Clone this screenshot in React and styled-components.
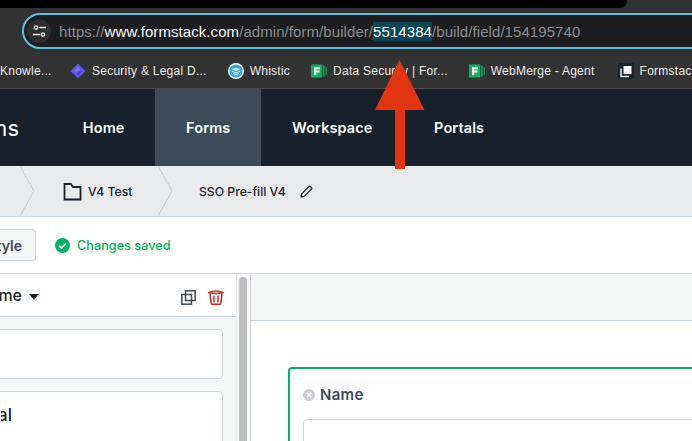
import React from 'react';
import styled, {createGlobalStyle} from 'styled-components';

const GlobalStyle = createGlobalStyle`
    html, body {
        margin: 0;
        padding: 0;
        width: 692px;
        height: 441px;
        overflow: hidden;
        background: #fff;
    }
    * { box-sizing: border-box; }
`

const bookmarks = [
    {label: 'Knowle...', width: 48},
    {label: 'Security & Legal D...', icon: 'diamond', gap: 22},
    {label: 'Whistic', icon: 'whistic', gap: 21},
    {label: 'Data Security | For...', icon: 'formstack', gap: 21},
    {label: 'WebMerge - Agent', icon: 'formstack', gap: 21},
    {label: 'Formstack', icon: 'pages', gap: 23},
]

const navItems = ['Home', 'Forms', 'Workspace', 'Portals']

function BookmarkIcon({type}){
    if(type === 'diamond'){
        return (
            <svg width="16" height="16" viewBox="0 0 16 16">
                <path d="M8 0.500 15.500 8 8 15.500 0.500 8Z" fill="#5b55f0"/>
                <path d="M8 3.500 4.500 8l3.500 .500 2-1.500Z" fill="#7f7bf7"/>
                <path d="M9.500 8.500 7 10.500 8 12.500 11.500 8.500Z" fill="#3e38c4"/>
            </svg>
        )
    }
    if(type === 'whistic'){
        return (
            <svg width="16" height="16" viewBox="0 0 16 16">
                <circle cx="8" cy="8" r="8" fill="#fff"/>
                <circle cx="8" cy="8" r="6.600" fill="#35a9d8"/>
                <path d="M3.800 6.200 8 4.400l4.200 1.800L8 8Z" fill="#dff2fa"/>
                <path d="M3.800 8.200 8 10l4.200-1.800M4.800 10.200 8 11.800l3.200-1.600" fill="none" stroke="#dff2fa" strokeWidth="1"/>
            </svg>
        )
    }
    if(type === 'formstack'){
        return (
            <svg width="16" height="14" viewBox="0 0 16 14">
                <rect x="14.500" y="3" width="1.500" height="8" fill="#0a8f4f"/>
                <rect x="12" y="1.500" width="1.700" height="11" fill="#0a9e57"/>
                <rect x="0" y="0.500" width="11.300" height="13" fill="#0cb35f"/>
                <path d="M3 3.200h6v2H5.200v1.400h3.300v2H5.200v2.700H3Z" fill="#fff"/>
            </svg>
        )
    }
    return (
        <svg width="16" height="16" viewBox="0 0 16 16">
            <rect width="16" height="16" fill="#1a2330"/>
            <path d="M5.500 3h8v8h-8Z" fill="#fff"/>
            <path d="M3 5.500v8h8" fill="none" stroke="#fff" strokeWidth="1.400"/>
        </svg>
    )
}

function App(){
    return (
        <Page>
            <GlobalStyle/>
            <Browser>
                <TopStrip><BlackTab/></TopStrip>
                <AddressBar>
                    <SiteInfo>
                        <svg width="13" height="12" viewBox="0 0 13 12" fill="none" stroke="#e8e8e8" strokeWidth="1.300" strokeLinecap="round">
                            <circle cx="3" cy="2.500" r="1.700"/>
                            <path d="M6.500 2.500h6"/>
                            <circle cx="10" cy="9.500" r="1.700"/>
                            <path d="M0.500 9.500h6"/>
                        </svg>
                    </SiteInfo>
                    <Url>
                        https://<Host>www.formstack.com</Host>/admin/form/builder/<Selected>5514384</Selected>/build/field/154195740
                    </Url>
                </AddressBar>
                <BookmarkBar>
                    {bookmarks.map((b) => (
                        <Bookmark key={b.label} $gap={b.gap} $width={b.width}>
                            {b.icon && <BookmarkIcon type={b.icon}/>}
                            <span>{b.label}</span>
                        </Bookmark>
                    ))}
                </BookmarkBar>
            </Browser>

            <Nav>
                <Brand><span>Forms</span></Brand>
                {navItems.map((item) => (
                    <NavItem key={item} $active={item === 'Forms'}>{item}</NavItem>
                ))}
            </Nav>

            <Crumbs>
                <Chevron $left={20}/>
                <Crumb $width={124}>
                    <svg width="19" height="19" viewBox="0 0 19 19" fill="none" stroke="#18202b" strokeWidth="1.800">
                        <path d="M1.500 17.500V2h6.500l2 3h7.500v12.500Z"/>
                    </svg>
                    V4 Test
                </Crumb>
                <Chevron/>
                <Crumb $width={160} $pad={27}>
                    SSO Pre-fill V4
                    <svg width="13" height="13" viewBox="0 0 13 13" fill="none" stroke="#18202b" strokeWidth="1.200" strokeLinejoin="round" style={{marginLeft: 8}}>
                        <path d="M1 12 1.700 8.800 9 1.500a1 1 0 0 1 1.400 0l1.100 1.100a1 1 0 0 1 0 1.400L4.200 11.300Z"/>
                    </svg>
                </Crumb>
            </Crumbs>

            <Toolbar>
                <StyleButton><span>Style</span></StyleButton>
                <Saved>
                    <svg width="15" height="15" viewBox="0 0 15 15">
                        <circle cx="7.500" cy="7.500" r="7.500" fill="#00b463"/>
                        <path d="M4.200 7.800 6.500 10l4.300-4.500" fill="none" stroke="#fff" strokeWidth="1.800"/>
                    </svg>
                    Changes saved
                </Saved>
            </Toolbar>

            <Workspace>
                <LeftPanel>
                    <PanelHead>
                        <HeadTitle><span>Name</span></HeadTitle>
                        <Caret/>
                        <HeadActions>
                            <svg width="15" height="15" viewBox="0 0 15 15" fill="none" stroke="#3d4a57" strokeWidth="1.500">
                                <rect x="0.800" y="4.500" width="9.700" height="9.700"/>
                                <rect x="4.500" y="0.800" width="9.700" height="9.700"/>
                            </svg>
                            <svg width="16" height="15" viewBox="0 0 16 15" fill="none" stroke="#d3251c" strokeWidth="1.500">
                                <path d="M1 2.600Q8 -0.400 15 2.600Q8 4.400 1 2.600Z"/>
                                <path d="M2 3.500 3.200 13.200q.2 1.100 1.300 1.100h7q1.100 0 1.300-1.100L14 3.500"/>
                                <path d="M6 5.500v7M10 5.500v7"/>
                            </svg>
                        </HeadActions>
                    </PanelHead>
                    <PanelBody>
                        <SettingCard/>
                        <SettingCard><CardTitle><span>General</span></CardTitle></SettingCard>
                    </PanelBody>
                </LeftPanel>
                <ScrollTrack><ScrollThumb/></ScrollTrack>
                <Canvas>
                    <CanvasHead/>
                    <CanvasBody>
                        <FieldCard>
                            <FieldLabel>
                                <svg width="12" height="12" viewBox="0 0 12 12">
                                    <circle cx="6" cy="6" r="6" fill="#c9ccd0"/>
                                    <path d="M3.800 3.800 8.200 8.200M8.200 3.800 3.800 8.200" stroke="#fff" strokeWidth="1.500"/>
                                </svg>
                                Name
                            </FieldLabel>
                            <FieldInput/>
                        </FieldCard>
                    </CanvasBody>
                </Canvas>
            </Workspace>

            <Arrow width="52" height="111" viewBox="0 0 52 111">
                <path d="M25.500 1 50.500 51H31v59H21V51H1Z" fill="#e33412"/>
            </Arrow>
        </Page>
    )
}

export default App;

const Page = styled.div`
    position: relative;
    width: 692px;
    height: 441px;
    overflow: hidden;
    font-family: Inter, "Liberation Sans", sans-serif;
    display: flex;
    flex-direction: column;
`

const Browser = styled.div`
    height: 89px;
    flex: none;
    background: #323232;
    border-bottom: 1px solid #4a4a4a;
    display: flex;
    flex-direction: column;
`

const TopStrip = styled.div`
    height: 13px;
    flex: none;
`

const BlackTab = styled.div`
    width: 627px;
    height: 8px;
    background: #000;
    border-bottom-right-radius: 7px;
`

const AddressBar = styled.div`
    height: 36px;
    flex: none;
    margin-left: 21.500px;
    margin-right: -30px;
    display: flex;
    align-items: center;
    background: #1d1d1f;
    border: 2px solid #5cc1dd;
    border-radius: 18px;
    padding-left: 3.500px;
`

const SiteInfo = styled.div`
    width: 24px;
    height: 24px;
    flex: none;
    border-radius: 50%;
    background: #2e2e30;
    display: flex;
    align-items: center;
    justify-content: center;
`

const Url = styled.div`
    margin-left: 8px;
    font-family: "Liberation Sans", Arial, sans-serif;
    font-size: 15px;
    letter-spacing: 0.07px;
    color: #8a8a8c;
    white-space: nowrap;
`

const Host = styled.span`
    color: #fff;
`

const Selected = styled.span`
    color: #fff;
    background: #0c4555;
    padding: 1px 0;
`

const BookmarkBar = styled.div`
    flex: 1;
    display: flex;
    align-items: center;
    padding-top: 4px;
    white-space: nowrap;
    overflow: hidden;
    font-family: "Liberation Sans", Arial, sans-serif;
    font-size: 12px;
    letter-spacing: 0.25px;
    color: #ececec;
`

const Bookmark = styled.div`
    flex: none;
    display: flex;
    align-items: center;
    gap: 6px;
    margin-left: ${props => props.$gap || 0}px;
    ${props => props.$width ? `width: ${props.$width}px;` : ''}
`

const Nav = styled.div`
    height: 77px;
    flex: none;
    display: flex;
    background: #18202b;
    color: #fff;
`

const Brand = styled.div`
    width: 52px;
    flex: none;
    overflow: hidden;
    display: flex;
    justify-content: flex-end;
    align-items: center;
    font-size: 22px;
    font-weight: 400;
    span { margin-right: 33px; }
`

const NavItem = styled.div`
    display: flex;
    align-items: center;
    padding: 0 30.800px;
    font-size: 14.500px;
    letter-spacing: 0.1px;
    font-weight: 600;
    background: ${props => props.$active ? '#3d4a57' : 'transparent'};
`

const Crumbs = styled.div`
    height: 51px;
    flex: none;
    display: flex;
    background: #e9eaec;
    border-bottom: 1px solid #cdd5df;
    color: #18202b;
    font-size: 12.200px;
    font-weight: 500;
`

const Chevron = styled.div`
    width: 14px;
    height: 50px;
    flex: none;
    margin-left: ${props => props.$left || 0}px;
    background: linear-gradient(to bottom right, transparent calc(50% - 0.7px), #cfd5dc calc(50% - 0.7px), #cfd5dc calc(50% + 0.7px), transparent calc(50% + 0.7px)) bottom / 100% 50% no-repeat,
                linear-gradient(to top right, transparent calc(50% - 0.7px), #cfd5dc calc(50% - 0.7px), #cfd5dc calc(50% + 0.7px), transparent calc(50% + 0.7px)) top / 100% 50% no-repeat;
`

const Crumb = styled.div`
    width: ${props => props.$width}px;
    flex: none;
    display: flex;
    align-items: center;
    gap: 6px;
    padding-left: ${props => props.$pad || 29}px;
    white-space: nowrap;
`

const Toolbar = styled.div`
    height: 57px;
    flex: none;
    display: flex;
    align-items: center;
    background: #fff;
    border-bottom: 1px solid #cdd5df;
`

const StyleButton = styled.div`
    width: 36px;
    height: 32px;
    flex: none;
    overflow: hidden;
    display: flex;
    align-items: center;
    justify-content: flex-end;
    padding-right: 13px;
    background: #f5f7f7;
    border: 1px solid #cdd5df;
    border-left: none;
    border-radius: 0 4px 4px 0;
    color: #3d4a57;
    font-size: 14px;
    font-weight: 600;
`

const Saved = styled.div`
    margin-left: 19px;
    display: flex;
    align-items: center;
    gap: 7px;
    color: #00b463;
    font-size: 12.700px;
    font-weight: 500;
`

const Workspace = styled.div`
    flex: 1;
    min-height: 0;
    display: flex;
`

const LeftPanel = styled.div`
    width: 237px;
    flex: none;
    display: flex;
    flex-direction: column;
    border-right: 1px solid #dfe3e8;
`

const PanelHead = styled.div`
    height: 43px;
    flex: none;
    display: flex;
    align-items: center;
    background: #fff;
    border-bottom: 1px solid #cdd5df;
    padding-right: 12px;
`

const HeadTitle = styled.div`
    width: 22px;
    flex: none;
    overflow: hidden;
    display: flex;
    justify-content: flex-end;
    color: #18202b;
    font-size: 16px;
    font-weight: 500;
`

const Caret = styled.div`
    width: 0;
    height: 0;
    margin: 3px 0 0 7px;
    border-left: 5px solid transparent;
    border-right: 5px solid transparent;
    border-top: 6px solid #18202b;
`

const HeadActions = styled.div`
    margin-left: auto;
    display: flex;
    gap: 12px;
    padding-top: 5px;
`

const PanelBody = styled.div`
    flex: 1;
    display: flex;
    flex-direction: column;
    gap: 12px;
    padding: 12px 13px 0 0;
    background: #f5f6f6;
    overflow: hidden;
`

const SettingCard = styled.div`
    flex: none;
    height: 50px;
    margin-left: -6px;
    background: #fff;
    border: 1px solid #cdd5df;
    border-radius: 4px;
    padding: 13px 0 0 6px;
    &:last-child { height: 70px; }
`

const CardTitle = styled.div`
    width: 11px;
    overflow: hidden;
    display: flex;
    justify-content: flex-end;
    color: #18202b;
    font-size: 17px;
    font-weight: 500;
`

const ScrollTrack = styled.div`
    width: 14px;
    flex: none;
    padding: 3px 3px 0 2px;
    background: #fafafa;
    border-right: 1px solid #cdd5df;
`

const ScrollThumb = styled.div`
    width: 8px;
    height: 200px;
    background: #bebebe;
    border-radius: 4px;
`

const Canvas = styled.div`
    flex: 1;
    display: flex;
    flex-direction: column;
    min-width: 0;
`

const CanvasHead = styled.div`
    height: 47px;
    flex: none;
    background: #f5f6f6;
    border-bottom: 1px solid #cdd5df;
`

const CanvasBody = styled.div`
    flex: 1;
    overflow: hidden;
    padding: 46px 0 0 37px;
    background: #fff;
`

const FieldCard = styled.div`
    width: 500px;
    height: 120px;
    padding: 16px 0 0 13px;
    border: 2px solid #00b463;
    border-radius: 4px;
`

const FieldLabel = styled.div`
    display: flex;
    align-items: center;
    gap: 5px;
    color: #3d4a57;
    font-size: 15px;
    letter-spacing: 0.3px;
    font-weight: 600;
`

const FieldInput = styled.div`
    height: 50px;
    margin-top: 15px;
    border: 1px solid #cdd5df;
    border-radius: 4px;
`

const Arrow = styled.svg`
    position: absolute;
    left: 374px;
    top: 59px;
`
